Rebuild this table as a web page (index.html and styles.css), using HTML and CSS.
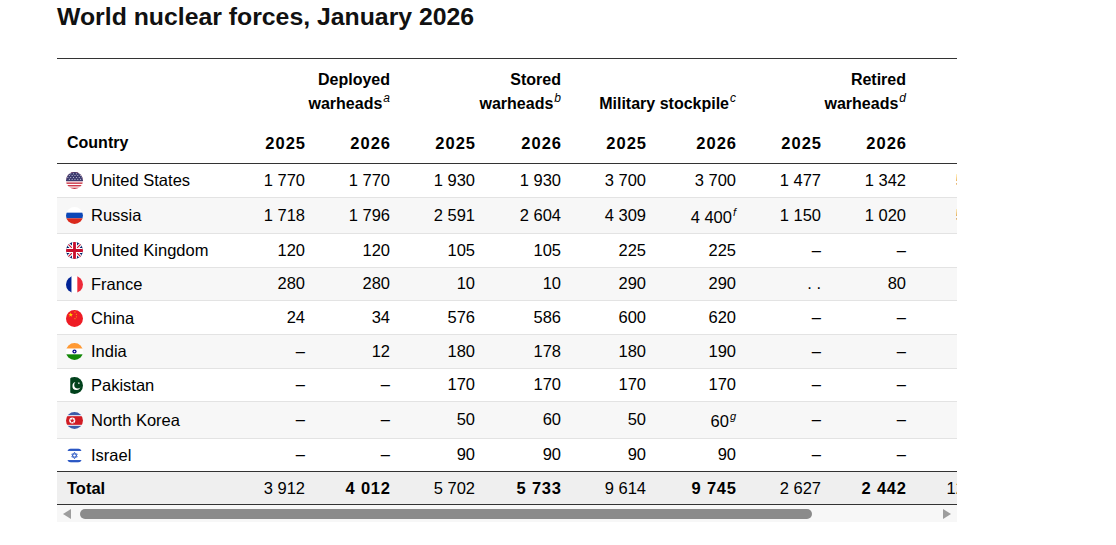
FILE: index.html
```html
<!DOCTYPE html>
<html lang="en">
<head>
<meta charset="utf-8">
<title>World nuclear forces, January 2026</title>
<link rel="stylesheet" href="styles.css">
</head>
<body>
<div class="page">
  <h1 class="title">World nuclear forces, January 2026</h1>
  <div class="frame">
    <div class="clip">
      <table class="forces">
        <colgroup>
          <col class="c-country">
          <col class="c-num"><col class="c-num">
          <col class="c-num"><col class="c-num-86">
          <col class="c-num"><col class="c-num-90">
          <col class="c-num"><col class="c-num">
          <col class="c-num-91"><col class="c-last">
        </colgroup>
        <thead>
          <tr class="groups">
            <th class="h-country" rowspan="2">Country</th>
            <th class="h-group" colspan="2">Deployed<br>warheads<sup>a</sup></th>
            <th class="h-group" colspan="2">Stored<br>warheads<sup>b</sup></th>
            <th class="h-group" colspan="2">Military stockpile<sup>c</sup></th>
            <th class="h-group" colspan="2">Retired<br>warheads<sup>d</sup></th>
            <th class="h-group" colspan="2">Total<br>inventory<sup>e</sup></th>
          </tr>
          <tr class="years">
            <th>2025</th><th>2026</th>
            <th>2025</th><th>2026</th>
            <th>2025</th><th>2026</th>
            <th>2025</th><th>2026</th>
            <th>2025</th><th>2026</th>
          </tr>
        </thead>
        <tbody>
          <tr>
            <td class="country"><span class="cname"><span class="flag"><svg viewBox="0 0 18 18"><rect width="18" height="18" fill="#ffffff"/><rect y="0" width="18" height="1.4" fill="#c8273a"/><rect y="2.8" width="18" height="1.4" fill="#c8273a"/><rect y="5.55" width="18" height="1.4" fill="#c8273a"/><rect y="8.3" width="18" height="1.4" fill="#c8273a"/><rect y="11.1" width="18" height="1.4" fill="#c8273a"/><rect y="13.85" width="18" height="1.4" fill="#c8273a"/><rect y="16.6" width="18" height="1.4" fill="#c8273a"/><rect width="18" height="9.7" fill="#3d3b6e"/><g fill="#d8d8e8"><circle cx="2" cy="1.8" r=".55"/><circle cx="5" cy="1.8" r=".55"/><circle cx="8" cy="1.8" r=".55"/><circle cx="11" cy="1.8" r=".55"/><circle cx="14" cy="1.8" r=".55"/><circle cx="17" cy="1.8" r=".55"/><circle cx="3.5" cy="3.8" r=".55"/><circle cx="6.5" cy="3.8" r=".55"/><circle cx="9.5" cy="3.8" r=".55"/><circle cx="12.5" cy="3.8" r=".55"/><circle cx="15.5" cy="3.8" r=".55"/><circle cx="2" cy="5.8" r=".55"/><circle cx="5" cy="5.8" r=".55"/><circle cx="8" cy="5.8" r=".55"/><circle cx="11" cy="5.8" r=".55"/><circle cx="14" cy="5.8" r=".55"/><circle cx="17" cy="5.8" r=".55"/><circle cx="3.5" cy="7.8" r=".55"/><circle cx="6.5" cy="7.8" r=".55"/><circle cx="9.5" cy="7.8" r=".55"/><circle cx="12.5" cy="7.8" r=".55"/><circle cx="15.5" cy="7.8" r=".55"/></g></svg></span>United States</span></td>
            <td>1&nbsp;770</td><td>1&nbsp;770</td><td>1&nbsp;930</td><td>1&nbsp;930</td><td>3&nbsp;700</td><td>3&nbsp;700</td><td>1&nbsp;477</td><td>1&nbsp;342</td><td>5&nbsp;177</td><td>5&nbsp;042</td>
          </tr>
          <tr class="alt">
            <td class="country"><span class="cname"><span class="flag"><svg viewBox="0 0 18 18"><rect width="18" height="6" fill="#ffffff"/><rect y="6" width="18" height="6" fill="#0c47b7"/><rect y="12" width="18" height="6" fill="#da291c"/></svg></span>Russia</span></td>
            <td>1&nbsp;718</td><td>1&nbsp;796</td><td>2&nbsp;591</td><td>2&nbsp;604</td><td>4&nbsp;309</td><td>4&nbsp;400<sup>f</sup></td><td>1&nbsp;150</td><td>1&nbsp;020</td><td>5&nbsp;459</td><td>5&nbsp;420</td>
          </tr>
          <tr>
            <td class="country"><span class="cname"><span class="flag"><svg viewBox="0 0 18 18"><rect width="18" height="18" fill="#012169"/><path d="M0 0L18 18M18 0L0 18" stroke="#ffffff" stroke-width="3.6"/><path d="M0 0L18 18M18 0L0 18" stroke="#c8102e" stroke-width="1.2"/><path d="M9 0V18M0 9H18" stroke="#ffffff" stroke-width="5.4"/><path d="M9 0V18M0 9H18" stroke="#c8102e" stroke-width="3"/></svg></span>United Kingdom</span></td>
            <td>120</td><td>120</td><td>105</td><td>105</td><td>225</td><td>225</td><td>–</td><td>–</td><td>225</td><td>225</td>
          </tr>
          <tr class="alt">
            <td class="country"><span class="cname"><span class="flag"><svg viewBox="0 0 18 18"><rect width="6" height="18" fill="#002395"/><rect x="6" width="6" height="18" fill="#ffffff"/><rect x="12" width="6" height="18" fill="#ed2939"/></svg></span>France</span></td>
            <td>280</td><td>280</td><td>10</td><td>10</td><td>290</td><td>290</td><td>.&nbsp;.</td><td>80</td><td>290</td><td>370</td>
          </tr>
          <tr>
            <td class="country"><span class="cname"><span class="flag"><svg viewBox="0 0 18 18"><rect width="18" height="18" fill="#ee1c25"/><polygon transform="translate(5 5) scale(2.6)" fill="#ffde00" points="0,-1 0.2245,-0.309 0.951,-0.309 0.363,0.118 0.588,0.809 0,0.382 -0.588,0.809 -0.363,0.118 -0.951,-0.309 -0.2245,-0.309"/><polygon transform="translate(9.5 2.2) scale(0.9)" fill="#ffde00" points="0,-1 0.2245,-0.309 0.951,-0.309 0.363,0.118 0.588,0.809 0,0.382 -0.588,0.809 -0.363,0.118 -0.951,-0.309 -0.2245,-0.309"/><polygon transform="translate(11 4.5) scale(0.9)" fill="#ffde00" points="0,-1 0.2245,-0.309 0.951,-0.309 0.363,0.118 0.588,0.809 0,0.382 -0.588,0.809 -0.363,0.118 -0.951,-0.309 -0.2245,-0.309"/><polygon transform="translate(11 7.3) scale(0.9)" fill="#ffde00" points="0,-1 0.2245,-0.309 0.951,-0.309 0.363,0.118 0.588,0.809 0,0.382 -0.588,0.809 -0.363,0.118 -0.951,-0.309 -0.2245,-0.309"/><polygon transform="translate(9.5 9.3) scale(0.9)" fill="#ffde00" points="0,-1 0.2245,-0.309 0.951,-0.309 0.363,0.118 0.588,0.809 0,0.382 -0.588,0.809 -0.363,0.118 -0.951,-0.309 -0.2245,-0.309"/></svg></span>China</span></td>
            <td>24</td><td>34</td><td>576</td><td>586</td><td>600</td><td>620</td><td>–</td><td>–</td><td>600</td><td>620</td>
          </tr>
          <tr class="alt">
            <td class="country"><span class="cname"><span class="flag"><svg viewBox="0 0 18 18"><rect width="18" height="6" fill="#ff9933"/><rect y="6" width="18" height="6" fill="#ffffff"/><rect y="12" width="18" height="6" fill="#138808"/><circle cx="9" cy="9" r="2.2" fill="#000080"/><circle cx="9" cy="9" r="0.9" fill="#ffffff"/></svg></span>India</span></td>
            <td>–</td><td>12</td><td>180</td><td>178</td><td>180</td><td>190</td><td>–</td><td>–</td><td>180</td><td>190</td>
          </tr>
          <tr>
            <td class="country"><span class="cname"><span class="flag"><svg viewBox="0 0 18 18"><rect width="18" height="18" fill="#ffffff"/><rect x="4.5" width="13.5" height="18" fill="#01411c"/><circle cx="11" cy="9.6" r="4.2" fill="#ffffff"/><circle cx="12.4" cy="8.4" r="3.7" fill="#01411c"/><polygon transform="translate(13.6 6.6) scale(1.3)" fill="#ffffff" points="0,-1 0.2245,-0.309 0.951,-0.309 0.363,0.118 0.588,0.809 0,0.382 -0.588,0.809 -0.363,0.118 -0.951,-0.309 -0.2245,-0.309"/></svg></span>Pakistan</span></td>
            <td>–</td><td>–</td><td>170</td><td>170</td><td>170</td><td>170</td><td>–</td><td>–</td><td>170</td><td>170</td>
          </tr>
          <tr class="alt">
            <td class="country"><span class="cname"><span class="flag"><svg viewBox="0 0 18 18"><rect width="18" height="18" fill="#ffffff"/><rect width="18" height="3.4" fill="#3c5ba8"/><rect y="14.6" width="18" height="3.4" fill="#3c5ba8"/><rect y="4.4" width="18" height="9.2" fill="#d01c24"/><circle cx="6.6" cy="9" r="3.2" fill="#ffffff"/><polygon transform="translate(6.6 9.2) scale(2.9)" fill="#d01c24" points="0,-1 0.2245,-0.309 0.951,-0.309 0.363,0.118 0.588,0.809 0,0.382 -0.588,0.809 -0.363,0.118 -0.951,-0.309 -0.2245,-0.309"/></svg></span>North Korea</span></td>
            <td>–</td><td>–</td><td>50</td><td>60</td><td>50</td><td>60<sup>g</sup></td><td>–</td><td>–</td><td>50</td><td>60</td>
          </tr>
          <tr>
            <td class="country"><span class="cname"><span class="flag"><svg viewBox="0 0 18 18"><rect width="18" height="18" fill="#ffffff"/><rect y="1.8" width="18" height="2.4" fill="#2a57c4"/><rect y="13.8" width="18" height="2.4" fill="#2a57c4"/><polygon points="9,5.6 11.9,10.6 6.1,10.6" fill="none" stroke="#2a57c4" stroke-width="0.9"/><polygon points="9,12.4 11.9,7.4 6.1,7.4" fill="none" stroke="#2a57c4" stroke-width="0.9"/></svg></span>Israel</span></td>
            <td>–</td><td>–</td><td>90</td><td>90</td><td>90</td><td>90</td><td>–</td><td>–</td><td>90</td><td>90</td>
          </tr>
        </tbody>
        <tfoot>
          <tr class="total">
            <td class="country">Total</td>
            <td>3&nbsp;912</td><td class="strong">4&nbsp;012</td>
            <td>5&nbsp;702</td><td class="strong">5&nbsp;733</td>
            <td>9&nbsp;614</td><td class="strong">9&nbsp;745</td>
            <td>2&nbsp;627</td><td class="strong">2&nbsp;442</td>
            <td>12&nbsp;241</td><td class="strong">12&nbsp;187</td>
          </tr>
        </tfoot>
      </table>
    </div>
    <div class="scrollbar">
      <span class="sb-btn"><span class="arrow-left"></span></span>
      <div class="sb-track"><div class="sb-thumb"></div></div>
      <span class="sb-btn"><span class="arrow-right"></span></span>
    </div>
  </div>
</div>
</body>
</html>
```
FILE: styles.css
```css
html, body {
  margin: 0;
  padding: 0;
  background: #ffffff;
}

body {
  font-family: "Liberation Sans", Arial, sans-serif;
  color: #000000;
}

.page {
  padding: 0 0 0 57px;
}

.title {
  margin: 0 0 26px 0;
  padding-top: 2px;
  font-size: 24.8px;
  line-height: 30px;
  font-weight: bold;
  color: #111111;
}

.frame {
  width: 900px;
}

.clip {
  width: 900px;
  overflow: hidden;
}

.forces {
  border-collapse: separate;
  border-spacing: 0;
  table-layout: fixed;
  width: 1065px;
  font-size: 16.5px;
}

.c-country { width: 173px; }
.c-num { width: 85px; }
.c-num-86 { width: 86px; }
.c-num-90 { width: 90px; }
.c-num-91 { width: 91px; }
.c-last { width: 115px; }

.forces th {
  font-weight: bold;
  font-size: 16px;
  text-align: right;
  padding: 0 10px;
  white-space: nowrap;
}

.groups th {
  border-top: 1px solid #333333;
  padding-top: 9px;
  padding-bottom: 6px;
  line-height: 24px;
  vertical-align: bottom;
}

.years th {
  padding-top: 11px;
  padding-bottom: 10px;
  padding-right: 9px;
  line-height: 20px;
  font-size: 16.5px;
  letter-spacing: 1px;
  border-bottom: 1px solid #333333;
  vertical-align: bottom;
}

.forces th.h-country {
  text-align: left;
  padding-bottom: 10px;
  line-height: 20px;
  border-bottom: 1px solid #333333;
  font-size: 16px;
}

.forces sup {
  font-style: italic;
  font-weight: normal;
  font-size: 12px;
  line-height: 0;
  vertical-align: 7px;
  margin-left: 1px;
}

.forces td {
  text-align: right;
  padding: 6px 10px 6.5px 10px;
  line-height: 19px;
  border-bottom: 1px solid #e3e3e3;
  white-space: nowrap;
}

.forces td sup {
  font-size: 11px;
  vertical-align: 7px;
  line-height: 17.75px;
}

.forces tbody tr.alt td {
  background: #f7f7f7;
}

.forces tbody tr:last-child td {
  border-bottom: none;
}

.forces td.country {
  text-align: left;
  padding-left: 9px;
}

.cname {
  display: inline-flex;
  align-items: center;
  gap: 8px;
  vertical-align: middle;
}

.flag {
  display: inline-block;
  width: 17px;
  height: 17px;
  border-radius: 50%;
  overflow: hidden;
  flex: none;
}

.flag svg {
  display: block;
  width: 17px;
  height: 17px;
}

.total td {
  background: #efefef;
  border-top: 1px solid #333333;
  border-bottom: 1px solid #333333;
  padding-top: 6.5px;
  padding-bottom: 6.5px;
}

.total td.country {
  font-weight: bold;
  padding-left: 10px;
}

.total td.strong {
  font-weight: bold;
  letter-spacing: 0.8px;
  padding-right: 9.2px;
}

.scrollbar {
  display: flex;
  align-items: center;
  height: 17px;
  background: #f7f7f7;
}

.sb-btn {
  width: 20px;
  height: 17px;
  display: flex;
  align-items: center;
  justify-content: center;
  flex: none;
}

.arrow-left {
  width: 0;
  height: 0;
  border-top: 5.5px solid transparent;
  border-bottom: 5.5px solid transparent;
  border-right: 8px solid #9d9d9d;
}

.arrow-right {
  width: 0;
  height: 0;
  border-top: 5.5px solid transparent;
  border-bottom: 5.5px solid transparent;
  border-left: 8px solid #9d9d9d;
}

.sb-track {
  flex: 1;
  height: 17px;
  display: flex;
  align-items: center;
}

.sb-thumb {
  margin-left: 3px;
  width: 732px;
  height: 10px;
  border-radius: 5px;
  background: #8b8b8b;
}
```
